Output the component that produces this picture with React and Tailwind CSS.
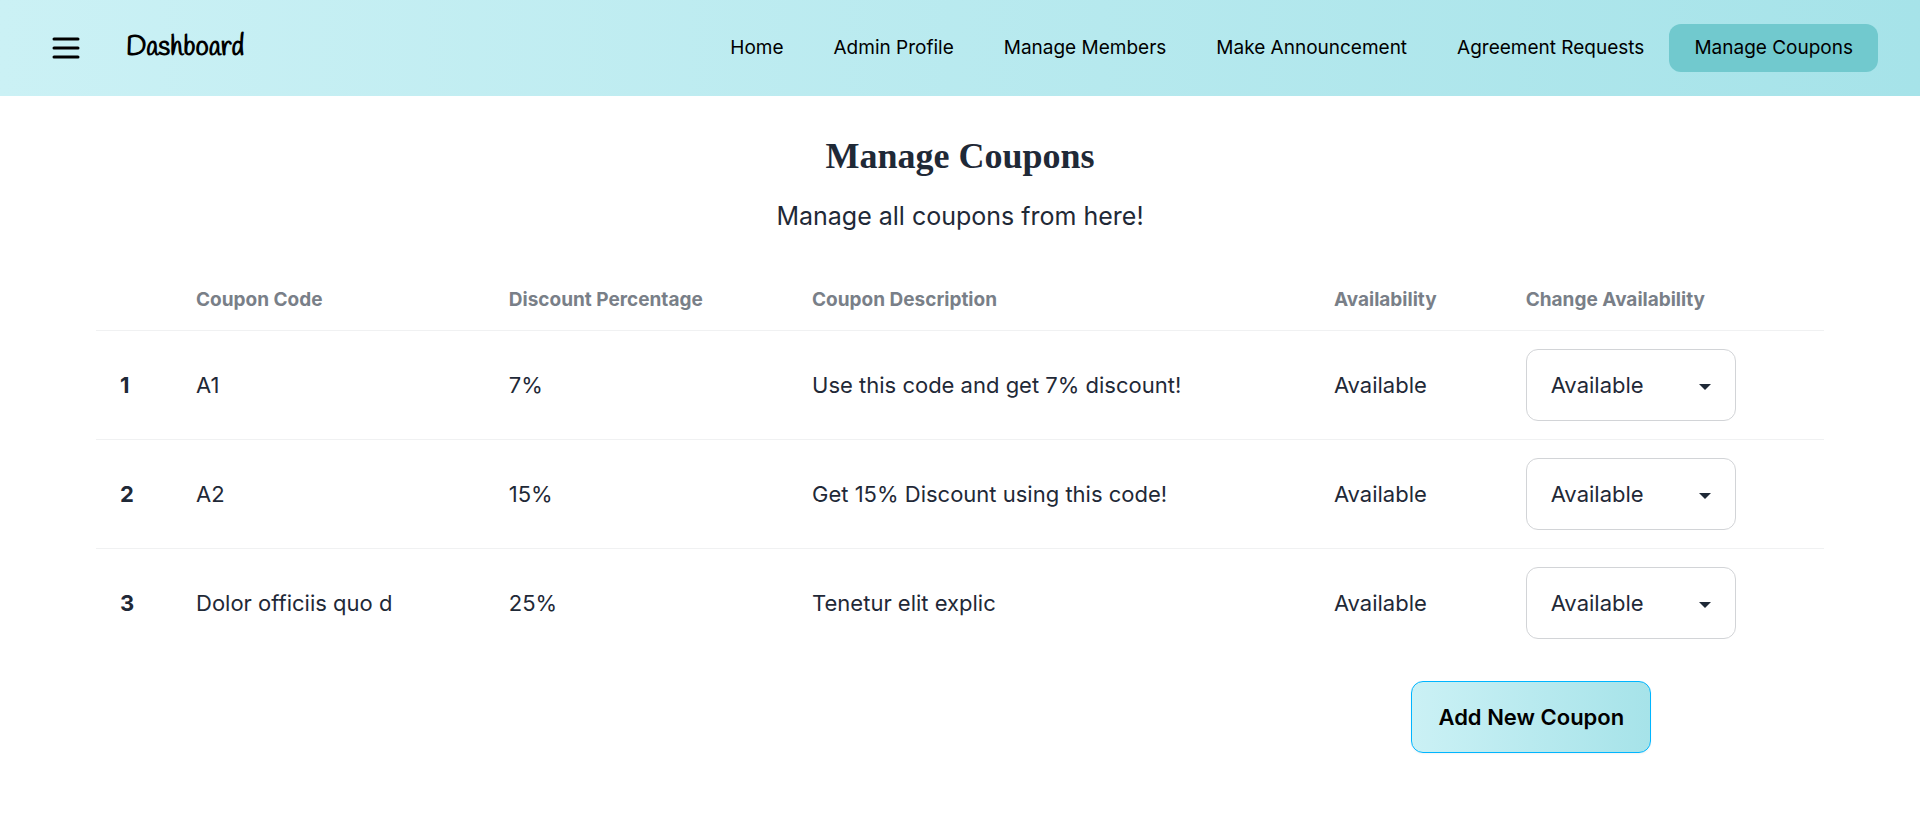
import { useState } from 'react';

const NAV_ITEMS = [
  'Home',
  'Admin Profile',
  'Manage Members',
  'Make Announcement',
  'Agreement Requests',
  'Manage Coupons',
];

const COUPONS = [
  { id: 1, code: 'A1', discount: '7%', description: 'Use this code and get 7% discount!' },
  { id: 2, code: 'A2', discount: '15%', description: 'Get 15% Discount using this code!' },
  { id: 3, code: 'Dolor officiis quo d', discount: '25%', description: 'Tenetur elit explic' },
];

function Header() {
  return (
    <header className="flex h-24 items-center justify-between bg-linear-to-r from-[#cbf1f5] to-[#a6e3e9] pr-[42px] pl-12 text-black">
      <div className="flex items-center gap-[42px]">
        <button type="button" aria-label="Open menu" className="size-9">
          <svg viewBox="0 0 24 24" className="size-9" fill="none" stroke="currentColor" strokeWidth="2" strokeLinecap="round">
            <path d="M4 6h16M4 12h16M4 18h16" />
          </svg>
        </button>
        <a href="#dashboard" className="font-['Handlee','Lato',cursive] text-[27px] leading-8 font-bold">
          Dashboard
        </a>
      </div>
      <nav>
        <ul className="flex items-center">
          {NAV_ITEMS.map((item) => (
            <li key={item}>
              <a
                href="#page"
                className={
                  item === 'Manage Coupons'
                    ? 'block rounded-xl bg-[#71c9ce] px-[25px] py-3 text-[19px] leading-6'
                    : 'block rounded-xl px-[25px] py-3 text-[19px] leading-6'
                }
              >
                {item}
              </a>
            </li>
          ))}
        </ul>
      </nav>
    </header>
  );
}

function AvailabilitySelect({ code }) {
  const [value, setValue] = useState('Available');
  return (
    <div className="relative w-[210px]">
      <select
        aria-label={`Change availability of ${code}`}
        value={value}
        onChange={(e) => setValue(e.target.value)}
        className="h-18 w-full appearance-none rounded-xl border border-[#d2d4d7] bg-white pr-12 pl-6 text-[22px]"
      >
        <option>Available</option>
        <option>Unavailable</option>
      </select>
      <svg viewBox="0 0 12 6" className="pointer-events-none absolute top-[35px] right-[25px] h-[6px] w-3" fill="currentColor">
        <path d="M0 0h12L6 6z" />
      </svg>
    </div>
  );
}

export default function App() {
  return (
    <div className="min-h-screen bg-white font-['Inter',sans-serif] text-[#1f2937]">
      <Header />
      <main className="mx-auto w-[90%]">
        <div className="pt-9 text-center">
          <h1 className="font-['Liberation_Serif',serif] text-4xl leading-12 font-bold">Manage Coupons</h1>
          <p className="mt-[18px] text-[25px] leading-9">Manage all coupons from here!</p>
        </div>
        <table className="mt-9 w-full table-fixed text-left text-[22px] leading-7">
          <thead>
            <tr className="h-[60px] border-b border-[#f0f1f2] text-[19px] leading-6 text-[#797f88]">
              <th className="w-[4.4%]" aria-label="Number"></th>
              <th className="w-[18.1%] px-6 font-bold">Coupon Code</th>
              <th className="w-[17.55%] px-6 font-bold">Discount Percentage</th>
              <th className="w-[30.2%] px-6 font-bold">Coupon Description</th>
              <th className="w-[11.1%] px-6 font-bold">Availability</th>
              <th className="px-6 font-bold">Change Availability</th>
            </tr>
          </thead>
          <tbody>
            {COUPONS.map((coupon) => (
              <tr key={coupon.id} className="h-[109px] border-b border-[#f0f1f2] last:border-b-0">
                <th scope="row" className="px-6 font-bold">{coupon.id}</th>
                <td className="px-6">{coupon.code}</td>
                <td className="px-6">{coupon.discount}</td>
                <td className="px-6">{coupon.description}</td>
                <td className="px-6">Available</td>
                <td className="px-6">
                  <AvailabilitySelect code={coupon.code} />
                </td>
              </tr>
            ))}
          </tbody>
        </table>
        <div className="mr-[10%] flex justify-end py-6">
          <button
            type="button"
            className="h-18 rounded-xl border border-[#00b5ff] bg-linear-to-r from-[#cbf1f5] to-[#a6e3e9] bg-origin-border px-[26px] text-[22px] font-semibold text-black shadow-xs"
          >
            Add New Coupon
          </button>
        </div>
      </main>
    </div>
  );
}
